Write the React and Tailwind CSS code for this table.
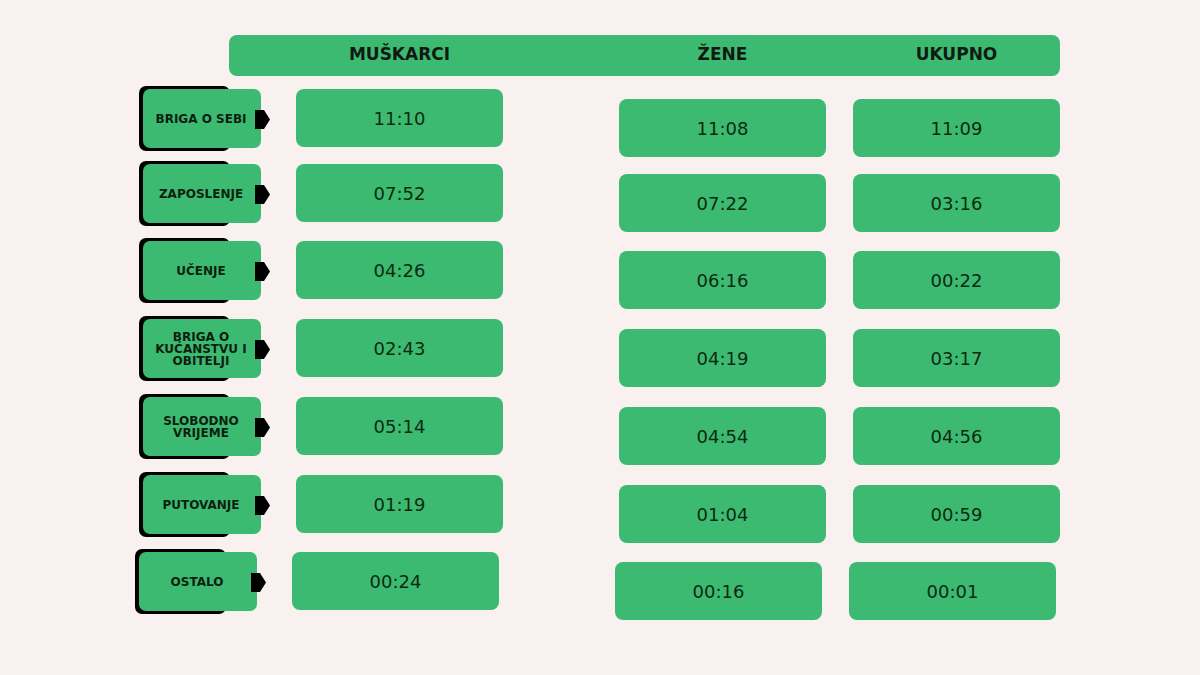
import React from 'react';

const rows = [
    { label: ["BRIGA O SEBI"], men: "11:10", women: "11:08", total: "11:09", row: "mt-[10px]" },
    { label: ["ZAPOSLENJE"], men: "07:52", women: "07:22", total: "03:16", row: "mt-[4px]" },
    { label: ["UČENJE"], men: "04:26", women: "06:16", total: "00:22", row: "mt-[6px]" },
    { label: ["BRIGA O", "KUĆANSTVU I", "OBITELJI"], men: "02:43", women: "04:19", total: "03:17", row: "mt-[7px]" },
    { label: ["SLOBODNO", "VRIJEME"], men: "05:14", women: "04:54", total: "04:56", row: "mt-[7px]" },
    { label: ["PUTOVANJE"], men: "01:19", women: "01:04", total: "00:59", row: "mt-[7px]" },
    { label: ["OSTALO"], men: "00:24", women: "00:16", total: "00:01", row: "mt-[6px] -ml-[4px]" },
];

function Label({ lines }) {
    return (
        <div className="relative w-[130px] h-[65px] shrink-0">
            <div className="absolute left-0 top-0 w-[91px] h-[65px] rounded-[7px] bg-black" />
            <div className="relative ml-[4px] mt-[3px] w-[118px] h-[59px] rounded-[7px] bg-[#3dba71] flex flex-col items-center justify-center text-center text-[12px] leading-[12px] font-bold text-[#0c1f10] pr-[2px]">
                {lines.map((l) => (
                    <span key={l}>{l}</span>
                ))}
            </div>
            <svg className="absolute left-[116px] top-[24px]" width="15" height="19" viewBox="0 0 15 19">
                <path d="M0 0 H9 L15 9.5 L9 19 H0 Z" fill="#000" />
            </svg>
        </div>
    );
}

function Cell({ value, className }) {
    return (
        <div className={"w-[207px] h-[58px] shrink-0 rounded-[8px] bg-[#3dba71] flex items-center justify-center text-[18px] text-[#0c2a12] " + className}>
            {value}
        </div>
    );
}

export default function App() {
    return (
        <div className="w-[1200px] h-[675px] bg-[#f8f1ef] pt-[35px] overflow-hidden" style={{ fontFamily: '"DejaVu Sans", "Noto Sans", sans-serif' }}>
            <div className="ml-[229px] w-[831px] h-[41px] rounded-[8px] bg-[#3dba71] flex items-center pl-[67px] text-[17px] font-bold text-[#111a12] pb-[2px]">
                <div className="w-[207px] text-center">MUŠKARCI</div>
                <div className="w-[116px]" />
                <div className="w-[207px] text-center">ŽENE</div>
                <div className="w-[27px]" />
                <div className="w-[207px] text-center">UKUPNO</div>
            </div>
            <div className="ml-[139px] flex flex-col">
                {rows.map((r) => (
                    <div key={r.men} className={"flex items-start h-[71px] " + r.row}>
                        <Label lines={r.label} />
                        <Cell value={r.men} className="ml-[27px] mt-[3px]" />
                        <Cell value={r.women} className="ml-[116px] mt-[13px]" />
                        <Cell value={r.total} className="ml-[27px] mt-[13px]" />
                    </div>
                ))}
            </div>
        </div>
    );
}
